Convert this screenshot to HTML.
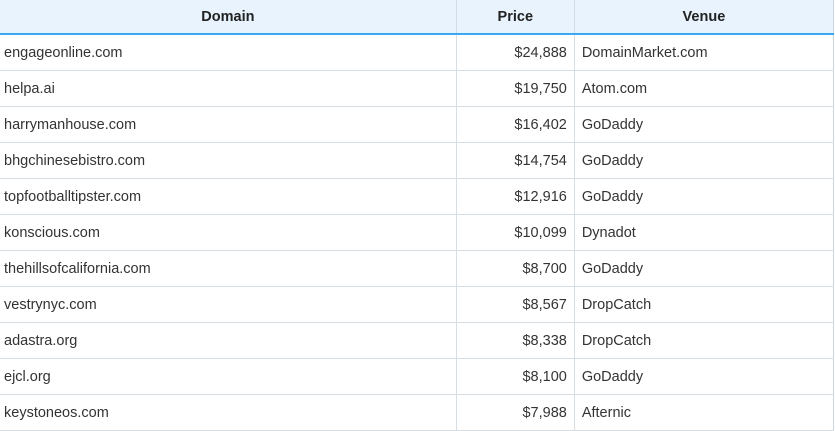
<!DOCTYPE html>
<html><head><style>
body{margin:0;background:#fff;font-family:"Liberation Sans",sans-serif;}
table{position:absolute;left:0;top:0;width:834px;border-collapse:collapse;table-layout:fixed;font-size:14.5px;color:#333;}
th{height:33px;background:#e8f3fd;font-weight:bold;color:#222;border-bottom:2px solid #3ba7f3;border-right:1px solid #cfdde8;padding:0;text-align:center;}
td{height:35px;border-bottom:1px solid #d6dde3;border-right:1px solid #d6dde3;padding:0 7px 0 4px;}
th:last-child,td:last-child{border-right:1px solid #cdd5dc;}
td.p{text-align:right;}
td.v{padding-left:7px;}
</style></head><body>
<table>
<colgroup><col style="width:456px"><col style="width:118px"><col style="width:259px"></colgroup>
<tr><th>Domain</th><th>Price</th><th>Venue</th></tr>
<tr><td>engageonline.com</td><td class="p">$24,888</td><td class="v">DomainMarket.com</td></tr>
<tr><td>helpa.ai</td><td class="p">$19,750</td><td class="v">Atom.com</td></tr>
<tr><td>harrymanhouse.com</td><td class="p">$16,402</td><td class="v">GoDaddy</td></tr>
<tr><td>bhgchinesebistro.com</td><td class="p">$14,754</td><td class="v">GoDaddy</td></tr>
<tr><td>topfootballtipster.com</td><td class="p">$12,916</td><td class="v">GoDaddy</td></tr>
<tr><td>konscious.com</td><td class="p">$10,099</td><td class="v">Dynadot</td></tr>
<tr><td>thehillsofcalifornia.com</td><td class="p">$8,700</td><td class="v">GoDaddy</td></tr>
<tr><td>vestrynyc.com</td><td class="p">$8,567</td><td class="v">DropCatch</td></tr>
<tr><td>adastra.org</td><td class="p">$8,338</td><td class="v">DropCatch</td></tr>
<tr><td>ejcl.org</td><td class="p">$8,100</td><td class="v">GoDaddy</td></tr>
<tr><td>keystoneos.com</td><td class="p">$7,988</td><td class="v">Afternic</td></tr>
</table>
</body></html>
